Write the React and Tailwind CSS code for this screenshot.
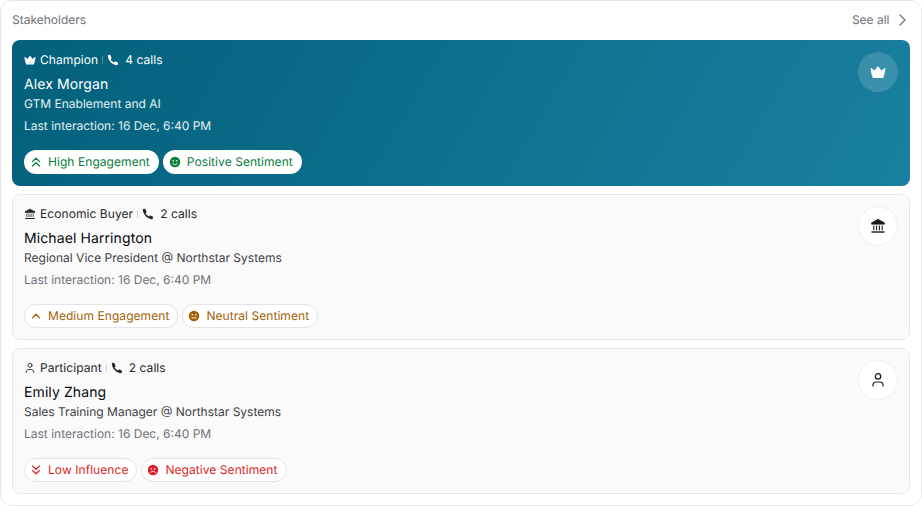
import React from "react";

const Crown = ({ className }) => (
  <svg viewBox="0 0 16 16" className={className} fill="currentColor">
    <path d="M1 4.400 4.800 7 8 2.600 11.200 7 15 4.400l-1.300 7.100H2.300z" strokeLinejoin="round" stroke="currentColor" strokeWidth="0.9" />
    <rect x="2.500" y="12" width="11" height="2" rx="0.600" />
  </svg>
);

const Bank = ({ className }) => (
  <svg viewBox="0 0 16 16" className={className} fill="none" stroke="currentColor">
    <path d="M8 1.200 14.500 4.800v1.400h-13V4.800z" fill="currentColor" strokeWidth="0.6" strokeLinejoin="round" />
    <path d="M3.800 7.500v4.700M6.600 7.500v4.700M9.400 7.500v4.700M12.200 7.500v4.700" strokeWidth="1.100" />
    <path d="M1.500 14h13" strokeWidth="1.400" />
  </svg>
);

const Person = ({ className }) => (
  <svg viewBox="0 0 16 16" className={className} fill="none" stroke="currentColor" strokeWidth="1.200" strokeLinecap="round">
    <circle cx="8" cy="4.400" r="2.700" />
    <path d="M3 14v-.8c0-1.800 1.400-3.200 3.200-3.200h3.600c1.800 0 3.200 1.400 3.200 3.200v.8" />
  </svg>
);

const Phone = ({ className }) => (
  <svg viewBox="0 0 16 16" className={className} fill="currentColor">
    <path d="M4.600 1.800 6 4.900c.2.400.1.800-.2 1.100l-1 1c.7 1.800 2.300 3.400 4.200 4.200l1-1c.3-.3.700-.4 1.100-.2l3.100 1.400c.4.200.6.600.5 1l-.4 1.700c-.1.500-.5.800-1 .8C7.400 14.700 1.300 8.600 1.100 2.300c0-.5.300-.9.800-1l1.700-.4c.4-.1.800.2 1 .9z" />
  </svg>
);

const ChevUp2 = ({ className }) => (
  <svg viewBox="0 0 16 16" className={className} fill="none" stroke="currentColor" strokeWidth="1.800" strokeLinecap="round" strokeLinejoin="round">
    <path d="m3.200 7.500 4.800-4.500 4.800 4.500M3.200 13.500l4.800-4.500 4.800 4.500" />
  </svg>
);
const ChevUp = ({ className }) => (
  <svg viewBox="0 0 16 16" className={className} fill="none" stroke="currentColor" strokeWidth="1.800" strokeLinecap="round" strokeLinejoin="round">
    <path d="m3.200 10.500 4.800-4.800 4.800 4.800" />
  </svg>
);
const ChevDown2 = ({ className }) => (
  <svg viewBox="0 0 16 16" className={className} fill="none" stroke="currentColor" strokeWidth="1.800" strokeLinecap="round" strokeLinejoin="round">
    <path d="m3.200 2.500 4.800 4.500 4.800-4.500M3.200 8.500l4.800 4.500 4.800-4.500" />
  </svg>
);

const Face = ({ mood, className }) => (
  <svg viewBox="0 0 16 16" className={className}>
    <circle cx="8" cy="8" r="7" fill="currentColor" />
    <circle cx="5.700" cy="6.400" r="1.100" fill="#fff" />
    <circle cx="10.300" cy="6.400" r="1.100" fill="#fff" />
    {mood === "pos" && <path d="M4.800 9.600c.7 1.300 1.800 1.900 3.200 1.900s2.500-.6 3.200-1.900" fill="none" stroke="#fff" strokeWidth="1.200" strokeLinecap="round" />}
    {mood === "neu" && <path d="M5 10.500h6" fill="none" stroke="#fff" strokeWidth="1.200" strokeLinecap="round" />}
    {mood === "neg" && <path d="M4.800 11.500c.7-1.300 1.800-1.900 3.200-1.900s2.500.6 3.200 1.900" fill="none" stroke="#fff" strokeWidth="1.200" strokeLinecap="round" />}
  </svg>
);

const Pill = ({ icon, children, color, border }) => (
  <span className={`flex h-6 items-center gap-1.5 rounded-full border bg-white pl-[5px] pr-2 ${color} ${border}`}>
    {icon}
    <span>{children}</span>
  </span>
);

function Card({ featured, roleIcon, bigIcon, role, calls, name, title, pills }) {
  return (
    <div
      className={
        featured
          ? "flex h-[146px] rounded-lg bg-[linear-gradient(120deg,#02607a,#1a80a0)] p-3 text-white"
          : "flex h-[146px] rounded-lg border border-[#e5e7eb] bg-[#fafafa] p-[11px] text-[#09090b]"
      }
    >
      <div className="flex flex-1 flex-col">
        <div className={`flex h-4 items-center text-xs tracking-[0.07px] ${featured ? "text-white" : "text-[#27272a]"}`}>
          {roleIcon}
          <span className="ml-1">{role}</span>
          <span className={`mx-1 h-2 w-px ${featured ? "bg-white/30" : "bg-[#d4d4d8]"}`} />
          <Phone className="h-3 w-3" />
          <span className="ml-1.5">{calls}</span>
        </div>
        <div className="mt-[7px] text-sm leading-5 tracking-[0.1px]">{name}</div>
        <div className={`mt-px text-xs leading-4 ${featured ? "text-white/90" : "text-[#3f3f46]"}`}>{title}</div>
        <div className={`mt-1.5 text-xs leading-4 ${featured ? "text-white/90" : "text-[#71717a]"}`}>Last interaction: 16 Dec, 6:40 PM</div>
        <div className="mt-4 flex gap-1 text-xs tracking-[0.06px]">{pills}</div>
      </div>
      <div
        className={
          featured
            ? "flex h-10 w-10 items-center justify-center rounded-full bg-white/15 text-white"
            : "flex h-10 w-10 items-center justify-center rounded-full border border-[#f0f0f0] bg-white text-[#18181b]"
        }
      >
        {bigIcon}
      </div>
    </div>
  );
}

export default function App() {
  const green = "text-[#0a7d3e]";
  const amber = "text-[#a16207]";
  const red = "text-[#dc1f26]";
  const line = "border-[#e4e4e7]";
  return (
    <div className="h-[506px] w-[922px] bg-white font-['Inter',sans-serif] [text-rendering:geometricPrecision]">
      <div className="flex h-full flex-col rounded-xl border border-[#e5e7eb] bg-white px-[11px] pb-[11px]">
        <div className="mb-0.5 flex h-[37px] items-center justify-between text-xs text-[#71717a]">
          <span>Stakeholders</span>
          <span className="flex items-center gap-1 pr-[0.5px]">
            See all
            <svg viewBox="0 0 16 16" className="h-4 w-4" fill="none" stroke="currentColor" strokeWidth="1.300" strokeLinecap="round" strokeLinejoin="round">
              <path d="m6 3 5 5-5 5" />
            </svg>
          </span>
        </div>
        <div className="flex flex-col gap-2">
          <Card
            featured
            roleIcon={<Crown className="h-3 w-3" />}
            bigIcon={<Crown className="h-4 w-4" />}
            role="Champion"
            calls="4 calls"
            name="Alex Morgan"
            title="GTM Enablement and AI"
            pills={
              <>
                <Pill color={green} border="border-transparent" icon={<ChevUp2 className="h-3 w-3" />}>High Engagement</Pill>
                <Pill color={green} border="border-transparent" icon={<Face mood="pos" className="h-3 w-3" />}>Positive Sentiment</Pill>
              </>
            }
          />
          <Card
            roleIcon={<Bank className="h-3 w-3" />}
            bigIcon={<Bank className="h-4 w-4" />}
            role="Economic Buyer"
            calls="2 calls"
            name="Michael Harrington"
            title="Regional Vice President @ Northstar Systems"
            pills={
              <>
                <Pill color={amber} border={line} icon={<ChevUp className="h-3 w-3" />}>Medium Engagement</Pill>
                <Pill color={amber} border={line} icon={<Face mood="neu" className="h-3 w-3" />}>Neutral Sentiment</Pill>
              </>
            }
          />
          <Card
            roleIcon={<Person className="h-3 w-3" />}
            bigIcon={<Person className="h-4 w-4" />}
            role="Participant"
            calls="2 calls"
            name="Emily Zhang"
            title="Sales Training Manager @ Northstar Systems"
            pills={
              <>
                <Pill color={red} border={line} icon={<ChevDown2 className="h-3 w-3" />}>Low Influence</Pill>
                <Pill color={red} border={line} icon={<Face mood="neg" className="h-3 w-3" />}>Negative Sentiment</Pill>
              </>
            }
          />
        </div>
      </div>
    </div>
  );
}
